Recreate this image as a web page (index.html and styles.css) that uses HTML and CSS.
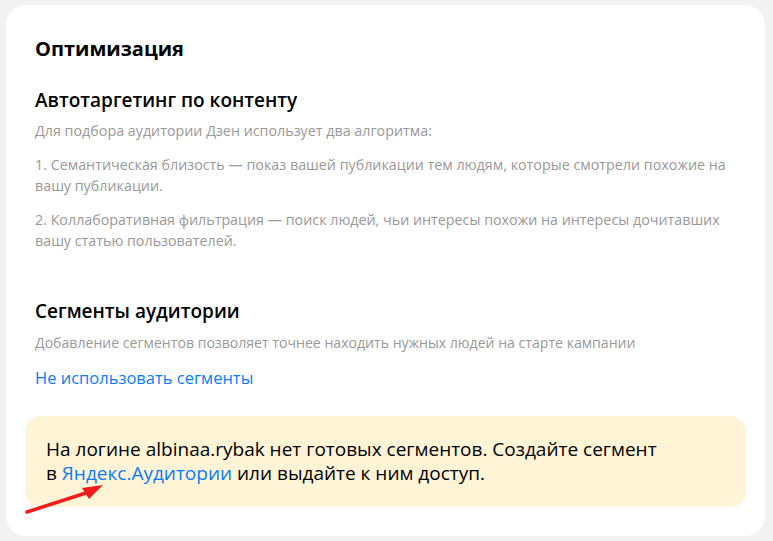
FILE: index.html
```html
<!DOCTYPE html>
<html lang="ru">
<head>
<meta charset="UTF-8" />
<meta name="viewport" content="width=device-width, initial-scale=1" />
<title>Оптимизация</title>
<link rel="stylesheet" href="styles.css">
</head>
<body>

<div class="card">
  <h2 class="title">Оптимизация</h2>

  <section class="block">
    <h3 class="subtitle">Автотаргетинг по контенту</h3>
    <p class="hint">Для подбора аудитории Дзен использует два алгоритма:</p>
    <p class="hint">1. Семантическая близость — показ вашей публикации тем людям, которые смотрели похожие на вашу публикации.</p>
    <p class="hint">2. Коллаборативная фильтрация — поиск людей, чьи интересы похожи на интересы дочитавших вашу статью пользователей.</p>
  </section>

  <section class="block segments">
    <h3 class="subtitle">Сегменты аудитории</h3>
    <p class="hint">Добавление сегментов позволяет точнее находить нужных людей на старте кампании</p>
    <a class="link" href="#">Не использовать сегменты</a>
  </section>

  <div class="notice">
    На логине albinaa.rybak нет готовых сегментов. Создайте сегмент<br>
    в <a class="link" href="#">Яндекс.Аудитории</a> или выдайте к ним доступ.
    <svg class="arrow" width="90" height="42" viewBox="0 0 90 42">
      <line x1="4" y1="36" x2="66" y2="16" stroke="#f21b1b" stroke-width="3.5" stroke-linecap="round" />
      <polygon points="80,9 59,12 66,23" fill="#f21b1b" />
    </svg>
  </div>
</div>

</body>
</html>
```

FILE: styles.css
```css
body {
  margin: 0;
  padding: 5px 8px 6px 6px;
  background: #f2f2f2;
  font-family: "Open Sans", "Noto Sans", sans-serif;
  color: #000;
}
.card {
  background: #fff;
  border-radius: 20px;
  padding: 30px 19px 29px 19px;
}
.title {
  margin: 0 0 0 10px;
  font-size: 20px;
  line-height: 28px;
  font-weight: 700;
}
.block {
  padding: 0 10px;
  margin-top: 24px;
}
.subtitle {
  margin: 0 0 7px;
  font-size: 19px;
  line-height: 26px;
  font-weight: 600;
}
.hint {
  margin: 0 0 12px;
  font-size: 14.3px;
  line-height: 21.5px;
  color: #999;
}
.segments {
  margin-top: 46px;
}
.segments .subtitle {
  margin-bottom: 8px;
}
.segments .hint {
  font-size: 14.1px;
}
.link {
  color: #0a7cff;
  text-decoration: none;
}
.segments .link {
  display: block;
  margin-top: 13px;
  font-size: 16.5px;
  line-height: 24px;
}
.notice {
  position: relative;
  margin-top: 26px;
  background: #fff5d6;
  border-radius: 16px;
  padding: 21px 19px 22px 21px;
  font-size: 19px;
  line-height: 24px;
}
.arrow {
  position: absolute;
  left: -2px;
  top: 60px;
}
```
